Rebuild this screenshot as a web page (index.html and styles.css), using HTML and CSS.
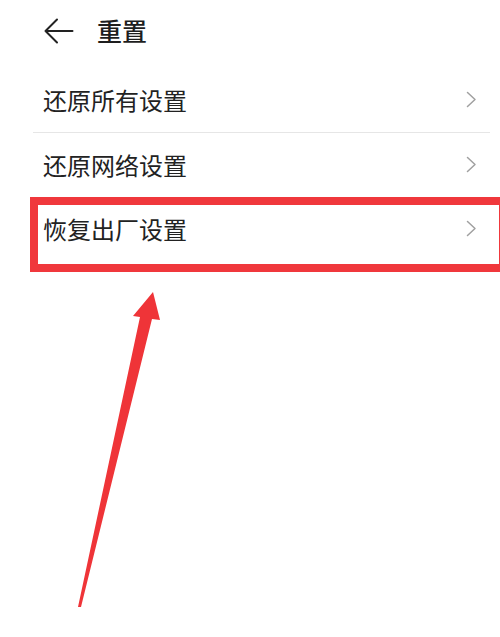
FILE: index.html
```html
<!DOCTYPE html>
<html lang="zh-CN">
<head>
<meta charset="utf-8">
<title>重置</title>
<link rel="stylesheet" href="styles.css">
</head>
<body>
<div class="screen">
  <header class="topbar">
    <svg class="back" width="30" height="26" viewBox="0 0 30 26" aria-hidden="true">
      <path d="M13 1.5 L1.5 13 L13 24.5 M1.5 13 H28.5" fill="none" stroke="#222" stroke-width="2" stroke-linecap="round" stroke-linejoin="round"/>
    </svg>
    <h1 class="title">重置</h1>
  </header>
  <ul class="list">
    <li class="row">
      <span class="label">还原所有设置</span>
      <svg class="chev" width="11" height="17" viewBox="0 0 11 17" aria-hidden="true"><path d="M1.5 1.5 L9 8.5 L1.5 15.5" fill="none" stroke="#a0a0a0" stroke-width="1.5" stroke-linecap="round" stroke-linejoin="round"/></svg>
    </li>
    <li class="divider"></li>
    <li class="row">
      <span class="label">还原网络设置</span>
      <svg class="chev" width="11" height="17" viewBox="0 0 11 17" aria-hidden="true"><path d="M1.5 1.5 L9 8.5 L1.5 15.5" fill="none" stroke="#a0a0a0" stroke-width="1.5" stroke-linecap="round" stroke-linejoin="round"/></svg>
    </li>
    <li class="row">
      <span class="label">恢复出厂设置</span>
      <svg class="chev" width="11" height="17" viewBox="0 0 11 17" aria-hidden="true"><path d="M1.5 1.5 L9 8.5 L1.5 15.5" fill="none" stroke="#a0a0a0" stroke-width="1.5" stroke-linecap="round" stroke-linejoin="round"/></svg>
    </li>
  </ul>
  <div class="highlight"></div>
  <svg class="pointer" width="500" height="637" viewBox="0 0 500 637" aria-hidden="true">
    <polygon points="153,292 160,320 152,319 81,607 78,607 140,317 133,316" fill="#ef3438"/>
  </svg>
</div>
</body>
</html>
```

FILE: styles.css
```css
html, body {
  margin: 0;
  padding: 0;
  background: #ffffff;
}
.screen {
  position: relative;
  width: 500px;
  height: 637px;
  overflow: hidden;
  background: #ffffff;
  font-family: "Noto Sans CJK SC", "Noto Sans", sans-serif;
  color: #222222;
}
.topbar {
  height: 61px;
  display: flex;
  align-items: center;
  padding-left: 44px;
  gap: 23px;
  box-sizing: border-box;
}
.back {
  display: block;
  margin-top: 1px;
}
.title {
  margin: 0;
  font-size: 25px;
  font-weight: 500;
  line-height: 1;
  color: #1e1e1e;
}
.list {
  list-style: none;
  margin: 0;
  padding: 7px 0 0;
}
.row {
  height: 64px;
  display: flex;
  align-items: center;
  justify-content: space-between;
  padding: 0 23px 0 43px;
  box-sizing: border-box;
}
.label {
  font-size: 24px;
  line-height: 1;
  color: #222222;
}
.chev {
  display: block;
  margin-top: -2px;
}
.divider {
  height: 1px;
  margin: 0 10px 0 33px;
  background: #e6e6e6;
}
.highlight {
  position: absolute;
  left: 30px;
  top: 197px;
  width: 477px;
  height: 75px;
  box-sizing: border-box;
  border: 8px solid #f0383c;
}
.pointer {
  position: absolute;
  left: 0;
  top: 0;
}
```
